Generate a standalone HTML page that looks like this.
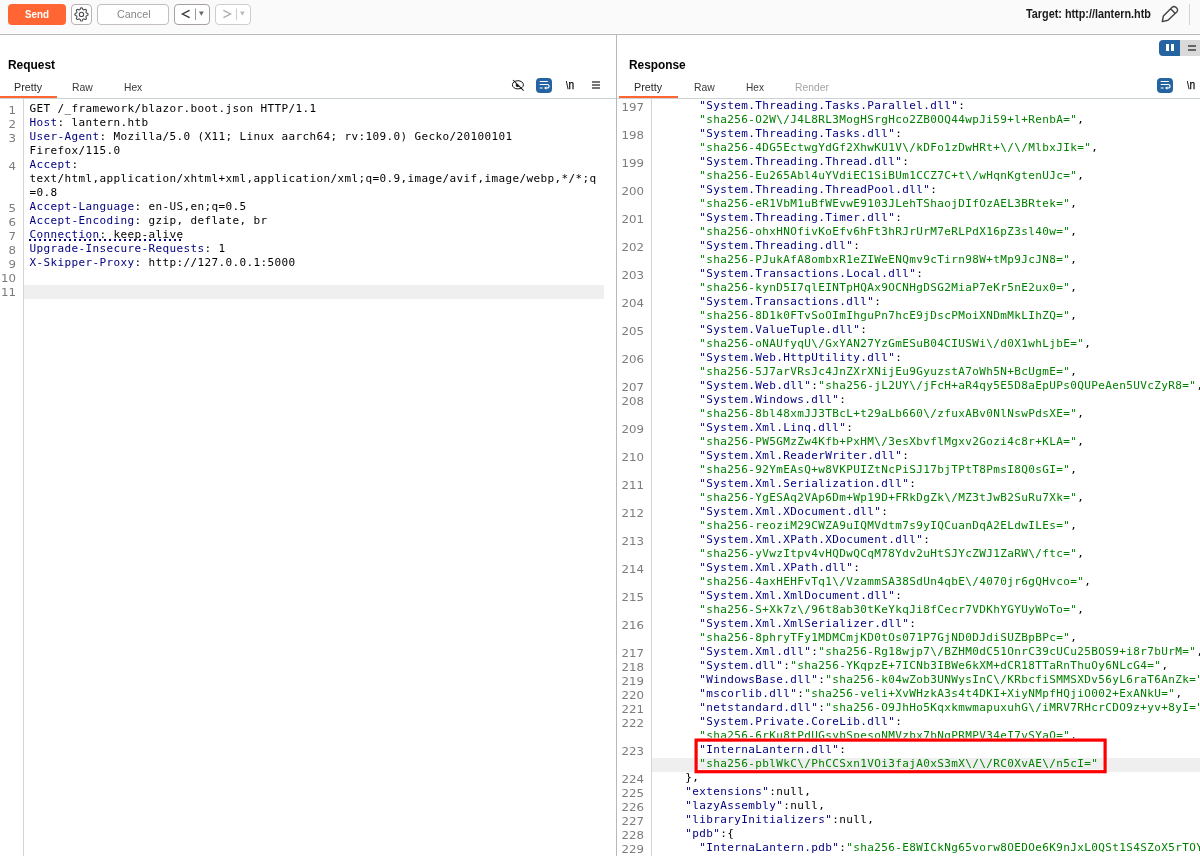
<!DOCTYPE html>
<html><head><meta charset="utf-8"><title>Burp Repeater</title>
<style>
html,body{margin:0;padding:0}
body{width:1200px;height:856px;overflow:hidden;position:relative;background:#fff;font-family:"Liberation Sans",sans-serif;font-size:12px;color:#000}
div{position:absolute;box-sizing:border-box}
.row,.ln{font-family:"DejaVu Sans Mono","Liberation Mono",monospace;font-size:11px;letter-spacing:0.378px;line-height:14px;height:14px;white-space:pre}
.ln{color:#7c7c7c;text-align:right;font-family:"DejaVu Sans",sans-serif;letter-spacing:0;font-size:11px;transform:scaleX(1.07);transform-origin:100% 50%}
.n{color:#000080}.g{color:#008000}
.u{background:repeating-linear-gradient(90deg,#000080 0,#000080 2px,transparent 2px,transparent 5px) 0 11px/100% 2px no-repeat;display:inline-block;height:14px}
.btn{border:1px solid #b9b1b1;border-radius:4px;background:#fff;height:21px;top:4px}
.t{line-height:16px;height:16px;white-space:nowrap}
.t span{display:inline-block;transform-origin:0 0}
svg{position:absolute;left:0;top:0;overflow:visible}
</style></head><body>
<div id="app" style="left:0;top:0;width:1200px;height:856px;will-change:transform">
<header id="toolbar">
<!-- top bar -->
<div style="left:0;top:0;width:1200px;height:33px;background:#fafafa"></div>
<div style="left:0;top:34px;width:1200px;height:1px;background:#bbb6b6"></div>
<div style="left:8px;top:4px;width:58px;height:21px;background:#ff6633;border-radius:4px"></div>
<div class="btn" style="left:71px;width:21px"></div>
<div class="btn" style="left:97px;width:72px;border-color:#c4bebe"></div>
<div class="btn" style="left:174px;width:36px;border-color:#a9a0a0"></div>
<div class="btn" style="left:215px;width:36px;border-color:#d2cdcd"></div>
<div style="left:1189px;top:4px;width:1px;height:21px;background:#d6d3d3"></div>

<svg width="1200" height="100" viewBox="0 0 1200 100" fill="none">
<!-- gear -->
 <path d="M81.45 7.80 L81.77 7.83 L82.08 7.96 L82.36 8.24 L82.58 8.71 L82.76 9.19 L82.94 9.49 L83.14 9.67 L83.36 9.78 L83.60 9.86 L83.87 9.88 L84.21 9.79 L84.67 9.58 L85.16 9.40 L85.56 9.40 L85.86 9.53 L86.12 9.73 L86.32 9.99 L86.45 10.29 L86.45 10.69 L86.27 11.18 L86.06 11.64 L85.97 11.98 L85.99 12.25 L86.07 12.49 L86.18 12.71 L86.36 12.91 L86.66 13.09 L87.14 13.27 L87.61 13.49 L87.89 13.77 L88.02 14.08 L88.05 14.40 L88.02 14.72 L87.89 15.03 L87.61 15.31 L87.14 15.53 L86.66 15.71 L86.36 15.89 L86.18 16.09 L86.07 16.31 L85.99 16.55 L85.97 16.82 L86.06 17.16 L86.27 17.62 L86.45 18.11 L86.45 18.51 L86.32 18.81 L86.12 19.07 L85.86 19.27 L85.56 19.40 L85.16 19.40 L84.67 19.22 L84.21 19.01 L83.87 18.92 L83.60 18.94 L83.36 19.02 L83.14 19.13 L82.94 19.31 L82.76 19.61 L82.58 20.09 L82.36 20.56 L82.08 20.84 L81.77 20.97 L81.45 21.00 L81.13 20.97 L80.82 20.84 L80.54 20.56 L80.32 20.09 L80.14 19.61 L79.96 19.31 L79.76 19.13 L79.54 19.02 L79.30 18.94 L79.03 18.92 L78.69 19.01 L78.23 19.22 L77.74 19.40 L77.34 19.40 L77.04 19.27 L76.78 19.07 L76.58 18.81 L76.45 18.51 L76.45 18.11 L76.63 17.62 L76.84 17.16 L76.93 16.82 L76.91 16.55 L76.83 16.31 L76.72 16.09 L76.54 15.89 L76.24 15.71 L75.76 15.53 L75.29 15.31 L75.01 15.03 L74.88 14.72 L74.85 14.40 L74.88 14.08 L75.01 13.77 L75.29 13.49 L75.76 13.27 L76.24 13.09 L76.54 12.91 L76.72 12.71 L76.83 12.49 L76.91 12.25 L76.93 11.98 L76.84 11.64 L76.63 11.18 L76.45 10.69 L76.45 10.29 L76.58 9.99 L76.78 9.73 L77.04 9.53 L77.34 9.40 L77.74 9.40 L78.23 9.58 L78.69 9.79 L79.03 9.88 L79.30 9.86 L79.54 9.78 L79.76 9.67 L79.96 9.49 L80.14 9.19 L80.32 8.71 L80.54 8.24 L80.82 7.96 L81.13 7.83Z" stroke="#484848" stroke-width="1.1" stroke-linejoin="round"/>
 <circle cx="81.45" cy="14.4" r="2.15" stroke="#484848" stroke-width="1.1"/>
 <!-- < | v -->
 <path d="M189.6 10.4 L182.4 14 L189.6 17.6" stroke="#333" stroke-width="1.3"/>
 <path d="M195.5 8.5V20" stroke="#999" stroke-width="1"/>
 <path d="M199 11.6h4.8l-2.400 4.200z" fill="#666"/>
 <!-- > | v -->
 <path d="M223.4 10.4 L230.600 14 L223.4 17.6" stroke="#aaa" stroke-width="1.3"/>
 <path d="M236.500 8.500V20" stroke="#ccc" stroke-width="1"/>
 <path d="M240 11.600h4.800l-2.400 4.200z" fill="#bbb"/>
 <!-- pencil -->
 <path d="M1162.300 21.600 L1163.400 15.900 L1172.400 7.100 Q1174 5.700 1175.600 7.100 L1177.100 8.600 Q1178.400 10.200 1177 11.700 L1167.900 20.200 Z M1170.800 9 L1174.800 13" stroke="#444" stroke-width="1.45" stroke-linejoin="round"/>
 </svg>
<div class="t" style="left:25.25px;top:5.92px;font-size:11.5px;font-weight:bold;color:#fff"><span style="transform:scaleX(0.8526)">Send</span></div>
<div class="t" style="left:117.20px;top:6.02px;font-size:11.5px;font-weight:normal;color:#888"><span style="transform:scaleX(0.9364)">Cancel</span></div>
<div class="t" style="left:1026.20px;top:5.84px;font-size:12px;font-weight:bold;color:#1a1a1a"><span style="transform:scaleX(0.9023)">Target: http://lantern.htb</span></div>
</header>
<section id="request">
<!-- request panel chrome -->
<div style="left:0;top:98px;width:616px;height:1px;background:#ccd3d5"></div>
<div style="left:0;top:96px;width:57px;height:2px;background:#ff6633"></div>
<div style="left:23px;top:99px;width:1px;height:757px;background:#d4d4d4"></div>
<div style="left:24px;top:285px;width:580px;height:14px;background:#efefef"></div>
<div style="left:536px;top:78px;width:16px;height:15px;border-radius:4px;background:#2664a1"></div>

<!-- hamburger -->
<div style="left:592px;top:81px;width:8px;height:2px;background:#777"></div>
<div style="left:592px;top:84px;width:8px;height:2px;background:#777"></div>
<div style="left:592px;top:87px;width:8px;height:2px;background:#777"></div>

<svg width="1200" height="100" viewBox="0 0 1200 100" fill="none">
<!-- eye-off -->
 <ellipse cx="517.9" cy="84.8" rx="5.5" ry="4.100" stroke="#111" stroke-width="1"/>
 <path d="M516.300 83.700 A1.900 1.900 0 0 0 519 86.400 Z" fill="#111"/>
 <path d="M513 80 L523.600 90.600" stroke="#111" stroke-width="1.05"/>
 <g stroke="#fff" stroke-width="1.2"><path d="M539.700 81.500h8.100 M539.700 84.500h7.600a1.750 1.750 0 0 1 0 3.500h-1.300 M539.700 88h2.900"/></g>
 <path d="M546.400 86.300 L544 88 L546.400 89.700z" fill="#fff"/>
</svg>
<div class="t" style="left:8.00px;top:56.64px;font-size:12px;font-weight:bold;color:#000"><span style="transform:scaleX(0.9927)">Request</span></div>
<div class="t" style="left:13.50px;top:78.89px;font-size:11px;font-weight:normal;color:#2a2a2a"><span style="transform:scaleX(0.9750)">Pretty</span></div>
<div class="t" style="left:72.40px;top:78.89px;font-size:11px;font-weight:normal;color:#3a3a3a"><span style="transform:scaleX(0.9474)">Raw</span></div>
<div class="t" style="left:124.30px;top:78.89px;font-size:11px;font-weight:normal;color:#3a3a3a"><span style="transform:scaleX(0.9321)">Hex</span></div>
<div class="t" style="left:565.6px;top:76.9px;font-size:13px;color:#000;-webkit-text-stroke:0.25px #000"><span style="transform:scaleX(0.78)"><span style="font-size:11px;display:inline">\</span>n</span></div>
<div class="ln" style="top:104px;left:0;width:16px">1</div>
<div class="row" style="top:102px;left:29.4px">GET /_framework/blazor.boot.json HTTP/1.1</div>
<div class="ln" style="top:118px;left:0;width:16px">2</div>
<div class="row" style="top:116px;left:29.4px"><span class="n">Host</span>: lantern.htb</div>
<div class="ln" style="top:132px;left:0;width:16px">3</div>
<div class="row" style="top:130px;left:29.4px"><span class="n">User-Agent</span>: Mozilla/5.0 (X11; Linux aarch64; rv:109.0) Gecko/20100101</div>
<div class="row" style="top:144px;left:29.4px">Firefox/115.0</div>
<div class="ln" style="top:160px;left:0;width:16px">4</div>
<div class="row" style="top:158px;left:29.4px"><span class="n">Accept</span>:</div>
<div class="row" style="top:172px;left:29.4px">text/html,application/xhtml+xml,application/xml;q=0.9,image/avif,image/webp,*/*;q</div>
<div class="row" style="top:186px;left:29.4px">=0.8</div>
<div class="ln" style="top:202px;left:0;width:16px">5</div>
<div class="row" style="top:200px;left:29.4px"><span class="n">Accept-Language</span>: en-US,en;q=0.5</div>
<div class="ln" style="top:216px;left:0;width:16px">6</div>
<div class="row" style="top:214px;left:29.4px"><span class="n">Accept-Encoding</span>: gzip, deflate, br</div>
<div class="ln" style="top:230px;left:0;width:16px">7</div>
<div class="row" style="top:228px;left:29.4px"><span class="u"><span class="n">Connection</span>: keep-alive</span></div>
<div class="ln" style="top:244px;left:0;width:16px">8</div>
<div class="row" style="top:242px;left:29.4px"><span class="n">Upgrade-Insecure-Requests</span>: 1</div>
<div class="ln" style="top:258px;left:0;width:16px">9</div>
<div class="row" style="top:256px;left:29.4px"><span class="n">X-Skipper-Proxy</span>: http://127.0.0.1:5000</div>
<div class="ln" style="top:272px;left:0;width:16px">10</div>
<div class="ln" style="top:286px;left:0;width:16px">11</div>

</section>
<!-- splitter -->
<div style="left:616px;top:35px;width:1px;height:821px;background:#bcb7b7"></div>

<section id="response">
<!-- response panel chrome -->
<div style="left:617px;top:98px;width:583px;height:1px;background:#ccd3d5"></div>
<div style="left:619px;top:96px;width:59px;height:2px;background:#ff6633"></div>
<div style="left:651px;top:99px;width:1px;height:757px;background:#d4d4d4"></div>
<div style="left:652px;top:758px;width:548px;height:14px;background:#efefef"></div>
<div style="left:1157px;top:78px;width:16px;height:15px;border-radius:4px;background:#2664a1"></div>
<div style="left:1159px;top:40px;width:21px;height:16px;border-radius:4px 0 0 4px;background:#2664a1"></div>
<div style="left:1180px;top:40px;width:20px;height:16px;background:#d9d9d9"></div>
<div style="left:1166px;top:44px;width:3px;height:7px;background:#fff"></div>
<div style="left:1171px;top:44px;width:3px;height:7px;background:#fff"></div>
<div style="left:1188px;top:45px;width:8px;height:2px;background:#666"></div>
<div style="left:1188px;top:49px;width:8px;height:2px;background:#666"></div>
<svg width="1200" height="100" viewBox="0 0 1200 100" fill="none">
<g stroke="#fff" stroke-width="1.2"><path d="M1160.700 81.500h8.100 M1160.700 84.500h7.600a1.750 1.750 0 0 1 0 3.500h-1.300 M1160.700 88h2.900"/></g>
 <path d="M1167.400 86.300 L1165 88 L1167.400 89.700z" fill="#fff"/>
</svg>
<div class="t" style="left:629.40px;top:56.64px;font-size:12px;font-weight:bold;color:#000"><span style="transform:scaleX(0.9882)">Response</span></div>
<div class="t" style="left:634.40px;top:78.89px;font-size:11px;font-weight:normal;color:#2a2a2a"><span style="transform:scaleX(0.9784)">Pretty</span></div>
<div class="t" style="left:693.60px;top:78.89px;font-size:11px;font-weight:normal;color:#3a3a3a"><span style="transform:scaleX(0.9428)">Raw</span></div>
<div class="t" style="left:745.60px;top:78.89px;font-size:11px;font-weight:normal;color:#3a3a3a"><span style="transform:scaleX(0.9172)">Hex</span></div>
<div class="t" style="left:794.60px;top:78.89px;font-size:11px;font-weight:normal;color:#a6a6a6"><span style="transform:scaleX(0.9447)">Render</span></div>
<div class="t" style="left:1186.6px;top:76.9px;font-size:13px;color:#000;-webkit-text-stroke:0.25px #000"><span style="transform:scaleX(0.78)"><span style="font-size:11px;display:inline">\</span>n</span></div>
<div class="ln" style="top:101px;left:617px;width:27px">197</div>
<div class="row" style="top:99px;left:657.3px">      <span class="n">"System.Threading.Tasks.Parallel.dll"</span>:</div>
<div class="row" style="top:113px;left:657.3px">      <span class="g">"sha256-O2W\/J4L8RL3MogHSrgHco2ZB0OQ44wpJi59+l+RenbA="</span>,</div>
<div class="ln" style="top:129px;left:617px;width:27px">198</div>
<div class="row" style="top:127px;left:657.3px">      <span class="n">"System.Threading.Tasks.dll"</span>:</div>
<div class="row" style="top:141px;left:657.3px">      <span class="g">"sha256-4DG5EctwgYdGf2XhwKU1V\/kDFo1zDwHRt+\/\/MlbxJIk="</span>,</div>
<div class="ln" style="top:157px;left:617px;width:27px">199</div>
<div class="row" style="top:155px;left:657.3px">      <span class="n">"System.Threading.Thread.dll"</span>:</div>
<div class="row" style="top:169px;left:657.3px">      <span class="g">"sha256-Eu265Abl4uYVdiEC1SiBUm1CCZ7C+t\/wHqnKgtenUJc="</span>,</div>
<div class="ln" style="top:185px;left:617px;width:27px">200</div>
<div class="row" style="top:183px;left:657.3px">      <span class="n">"System.Threading.ThreadPool.dll"</span>:</div>
<div class="row" style="top:197px;left:657.3px">      <span class="g">"sha256-eR1VbM1uBfWEvwE9103JLehTShaojDIfOzAEL3BRtek="</span>,</div>
<div class="ln" style="top:213px;left:617px;width:27px">201</div>
<div class="row" style="top:211px;left:657.3px">      <span class="n">"System.Threading.Timer.dll"</span>:</div>
<div class="row" style="top:225px;left:657.3px">      <span class="g">"sha256-ohxHNOfivKoEfv6hFt3hRJrUrM7eRLPdX16pZ3sl40w="</span>,</div>
<div class="ln" style="top:241px;left:617px;width:27px">202</div>
<div class="row" style="top:239px;left:657.3px">      <span class="n">"System.Threading.dll"</span>:</div>
<div class="row" style="top:253px;left:657.3px">      <span class="g">"sha256-PJukAfA8ombxR1eZIWeENQmv9cTirn98W+tMp9JcJN8="</span>,</div>
<div class="ln" style="top:269px;left:617px;width:27px">203</div>
<div class="row" style="top:267px;left:657.3px">      <span class="n">"System.Transactions.Local.dll"</span>:</div>
<div class="row" style="top:281px;left:657.3px">      <span class="g">"sha256-kynD5I7qlEINTpHQAx9OCNHgDSG2MiaP7eKr5nE2ux0="</span>,</div>
<div class="ln" style="top:297px;left:617px;width:27px">204</div>
<div class="row" style="top:295px;left:657.3px">      <span class="n">"System.Transactions.dll"</span>:</div>
<div class="row" style="top:309px;left:657.3px">      <span class="g">"sha256-8D1k0FTvSoOImIhguPn7hcE9jDscPMoiXNDmMkLIhZQ="</span>,</div>
<div class="ln" style="top:325px;left:617px;width:27px">205</div>
<div class="row" style="top:323px;left:657.3px">      <span class="n">"System.ValueTuple.dll"</span>:</div>
<div class="row" style="top:337px;left:657.3px">      <span class="g">"sha256-oNAUfyqU\/GxYAN27YzGmESuB04CIUSWi\/d0X1whLjbE="</span>,</div>
<div class="ln" style="top:353px;left:617px;width:27px">206</div>
<div class="row" style="top:351px;left:657.3px">      <span class="n">"System.Web.HttpUtility.dll"</span>:</div>
<div class="row" style="top:365px;left:657.3px">      <span class="g">"sha256-5J7arVRsJc4JnZXrXNijEu9GyuzstA7oWh5N+BcUgmE="</span>,</div>
<div class="ln" style="top:381px;left:617px;width:27px">207</div>
<div class="row" style="top:379px;left:657.3px">      <span class="n">"System.Web.dll"</span>:<span class="g">"sha256-jL2UY\/jFcH+aR4qy5E5D8aEpUPs0QUPeAen5UVcZyR8="</span>,</div>
<div class="ln" style="top:395px;left:617px;width:27px">208</div>
<div class="row" style="top:393px;left:657.3px">      <span class="n">"System.Windows.dll"</span>:</div>
<div class="row" style="top:407px;left:657.3px">      <span class="g">"sha256-8bl48xmJJ3TBcL+t29aLb660\/zfuxABv0NlNswPdsXE="</span>,</div>
<div class="ln" style="top:423px;left:617px;width:27px">209</div>
<div class="row" style="top:421px;left:657.3px">      <span class="n">"System.Xml.Linq.dll"</span>:</div>
<div class="row" style="top:435px;left:657.3px">      <span class="g">"sha256-PW5GMzZw4Kfb+PxHM\/3esXbvflMgxv2Gozi4c8r+KLA="</span>,</div>
<div class="ln" style="top:451px;left:617px;width:27px">210</div>
<div class="row" style="top:449px;left:657.3px">      <span class="n">"System.Xml.ReaderWriter.dll"</span>:</div>
<div class="row" style="top:463px;left:657.3px">      <span class="g">"sha256-92YmEAsQ+w8VKPUIZtNcPiSJ17bjTPtT8PmsI8Q0sGI="</span>,</div>
<div class="ln" style="top:479px;left:617px;width:27px">211</div>
<div class="row" style="top:477px;left:657.3px">      <span class="n">"System.Xml.Serialization.dll"</span>:</div>
<div class="row" style="top:491px;left:657.3px">      <span class="g">"sha256-YgESAq2VAp6Dm+Wp19D+FRkDgZk\/MZ3tJwB2SuRu7Xk="</span>,</div>
<div class="ln" style="top:507px;left:617px;width:27px">212</div>
<div class="row" style="top:505px;left:657.3px">      <span class="n">"System.Xml.XDocument.dll"</span>:</div>
<div class="row" style="top:519px;left:657.3px">      <span class="g">"sha256-reoziM29CWZA9uIQMVdtm7s9yIQCuanDqA2ELdwILEs="</span>,</div>
<div class="ln" style="top:535px;left:617px;width:27px">213</div>
<div class="row" style="top:533px;left:657.3px">      <span class="n">"System.Xml.XPath.XDocument.dll"</span>:</div>
<div class="row" style="top:547px;left:657.3px">      <span class="g">"sha256-yVwzItpv4vHQDwQCqM78Ydv2uHtSJYcZWJ1ZaRW\/ftc="</span>,</div>
<div class="ln" style="top:563px;left:617px;width:27px">214</div>
<div class="row" style="top:561px;left:657.3px">      <span class="n">"System.Xml.XPath.dll"</span>:</div>
<div class="row" style="top:575px;left:657.3px">      <span class="g">"sha256-4axHEHFvTq1\/VzammSA38SdUn4qbE\/4070jr6gQHvco="</span>,</div>
<div class="ln" style="top:591px;left:617px;width:27px">215</div>
<div class="row" style="top:589px;left:657.3px">      <span class="n">"System.Xml.XmlDocument.dll"</span>:</div>
<div class="row" style="top:603px;left:657.3px">      <span class="g">"sha256-S+Xk7z\/96t8ab30tKeYkqJi8fCecr7VDKhYGYUyWoTo="</span>,</div>
<div class="ln" style="top:619px;left:617px;width:27px">216</div>
<div class="row" style="top:617px;left:657.3px">      <span class="n">"System.Xml.XmlSerializer.dll"</span>:</div>
<div class="row" style="top:631px;left:657.3px">      <span class="g">"sha256-8phryTFy1MDMCmjKD0tOs071P7GjND0DJdiSUZBpBPc="</span>,</div>
<div class="ln" style="top:647px;left:617px;width:27px">217</div>
<div class="row" style="top:645px;left:657.3px">      <span class="n">"System.Xml.dll"</span>:<span class="g">"sha256-Rg18wjp7\/BZHM0dC51OnrC39cUCu25BOS9+i8r7bUrM="</span>,</div>
<div class="ln" style="top:661px;left:617px;width:27px">218</div>
<div class="row" style="top:659px;left:657.3px">      <span class="n">"System.dll"</span>:<span class="g">"sha256-YKqpzE+7ICNb3IBWe6kXM+dCR18TTaRnThuOy6NLcG4="</span>,</div>
<div class="ln" style="top:675px;left:617px;width:27px">219</div>
<div class="row" style="top:673px;left:657.3px">      <span class="n">"WindowsBase.dll"</span>:<span class="g">"sha256-k04wZob3UNWysInC\/KRbcfiSMMSXDv56yL6raT6AnZk="</span>,</div>
<div class="ln" style="top:689px;left:617px;width:27px">220</div>
<div class="row" style="top:687px;left:657.3px">      <span class="n">"mscorlib.dll"</span>:<span class="g">"sha256-veli+XvWHzkA3s4t4DKI+XiyNMpfHQjiO002+ExANkU="</span>,</div>
<div class="ln" style="top:703px;left:617px;width:27px">221</div>
<div class="row" style="top:701px;left:657.3px">      <span class="n">"netstandard.dll"</span>:<span class="g">"sha256-O9JhHo5KqxkmwmapuxuhG\/iMRV7RHcrCDO9z+yv+8yI="</span>,</div>
<div class="ln" style="top:717px;left:617px;width:27px">222</div>
<div class="row" style="top:715px;left:657.3px">      <span class="n">"System.Private.CoreLib.dll"</span>:</div>
<div class="row" style="top:729px;left:657.3px">      <span class="g">"sha256-6rKu8tPdUGsybSpesoNMVzbx7bNgPRMPV34eI7vSYaQ="</span>,</div>
<div class="ln" style="top:745px;left:617px;width:27px">223</div>
<div class="row" style="top:743px;left:657.3px">      <span class="n">"InternaLantern.dll"</span>:</div>
<div class="row" style="top:757px;left:657.3px">      <span class="g">"sha256-pblWkC\/PhCCSxn1VOi3fajA0xS3mX\/\/RC0XvAE\/n5cI="</span></div>
<div class="ln" style="top:773px;left:617px;width:27px">224</div>
<div class="row" style="top:771px;left:657.3px">    },</div>
<div class="ln" style="top:787px;left:617px;width:27px">225</div>
<div class="row" style="top:785px;left:657.3px">    <span class="n">"extensions"</span>:null,</div>
<div class="ln" style="top:801px;left:617px;width:27px">226</div>
<div class="row" style="top:799px;left:657.3px">    <span class="n">"lazyAssembly"</span>:null,</div>
<div class="ln" style="top:815px;left:617px;width:27px">227</div>
<div class="row" style="top:813px;left:657.3px">    <span class="n">"libraryInitializers"</span>:null,</div>
<div class="ln" style="top:829px;left:617px;width:27px">228</div>
<div class="row" style="top:827px;left:657.3px">    <span class="n">"pdb"</span>:{</div>
<div class="ln" style="top:843px;left:617px;width:27px">229</div>
<div class="row" style="top:841px;left:657.3px">      <span class="n">"InternaLantern.pdb"</span>:<span class="g">"sha256-E8WICkNg65vorw8OEDOe6K9nJxL0QSt1S4SZoX5rTOYqkWGDHbm0A="</span></div>

<!-- annotation -->
<svg width="1200" height="856" viewBox="0 0 1200 856" fill="none"><rect x="696.1" y="740.1" width="409" height="31.6" stroke="#fff" stroke-opacity="0.75" stroke-width="4.8"/><rect x="696.1" y="740.1" width="409" height="31.6" stroke="#fe0000" stroke-width="3.2"/></svg>

</section>
</div>
</body></html>
